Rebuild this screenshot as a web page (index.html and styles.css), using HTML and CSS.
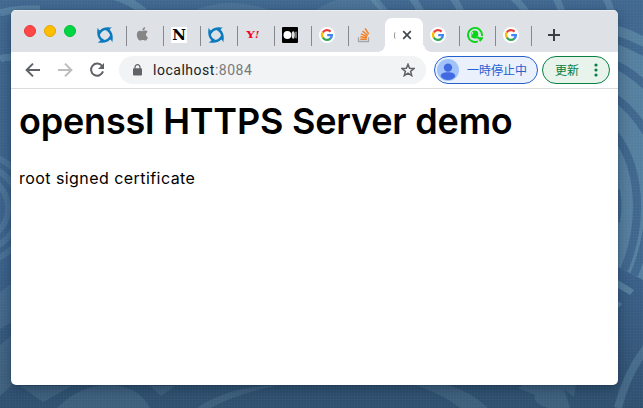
FILE: index.html
```html
<!DOCTYPE html>
<html lang="ja">
<head>
<meta charset="utf-8">
<title>localhost:8084</title>
<link rel="stylesheet" href="styles.css">
</head>
<body>
<svg class="wallpaper" viewBox="0 0 643 408" aria-hidden="true">
  <defs>
    <linearGradient id="sea" x1="0" y1="0" x2="0" y2="1"><stop offset="0" stop-color="#406890"/><stop offset=".65" stop-color="#3b618b"/><stop offset="1" stop-color="#2f506f"/></linearGradient>
    <pattern id="weave" width="3" height="3" patternUnits="userSpaceOnUse"><path d="M0 .5h3M.5 0v3" stroke="#fff" stroke-opacity=".02"/></pattern>
  </defs>
  <rect width="643" height="408" fill="url(#sea)"/>
  <g fill="none" stroke="#73a0b8" stroke-opacity=".4">
    <path d="M0 13Q18 8 40 9M0 59Q7 56 14 58" stroke-width="7"/>
    <path d="M114-4Q130 0 144 12" stroke-width="8"/>
    <path d="M368-8Q377 2 385 12M407-8Q415 0 421 12M449-8Q457 2 461 12M506-8Q518 0 526 12M552-8Q558 0 562 12M604-5Q609 2 611 12" stroke-width="7"/>
    <path d="M618 408Q626 374 648 345" stroke-width="8" stroke-opacity=".3"/>
    <circle cx="-25" cy="208" r="55" stroke-width="6" stroke-opacity=".25"/>
    <circle cx="-25" cy="208" r="44" stroke-width="6" stroke-opacity=".25"/>
    <circle cx="-25" cy="208" r="33" stroke-width="6" stroke-opacity=".25"/>
  </g>
  <path d="M616 25Q630 29 643 36V280L616 266Z" fill="#557f9f"/>
  <path d="M614 39Q630 44 646 53M614 64Q630 71 646 86M614 97Q631 108 646 132M614 133Q637 162 637 207Q637 240 624 270M648 222Q644 252 634 275M616 190Q619 207 616 222" fill="none" stroke="#3f678e" stroke-width="8"/>
  <path d="M618 280L634 290L630 295L618 288ZM618 301L622 304L618 308Z" fill="#557f9f"/>
  <g fill="#82a4b6" fill-opacity=".18">
    <path d="M190 12Q230-6 275 12ZM313 12Q342-9 374-1L386 12ZM0 292L12 283V322L0 329ZM0 345L12 335V385L0 396Z"/>
    <path d="M20 386H72L43 402ZM57 408Q80 385 108 385Q138 385 150 408ZM150 386H175L161 396ZM197 408Q228 386 280 385Q235 394 211 408ZM415 385H448Q470 391 488 408H460Q443 394 415 385ZM518 388Q526 382 535 385H576L574 397L564 389L570 408H548Q532 403 535 395Z"/>
  </g>
  <rect width="643" height="408" fill="url(#weave)"/>
</svg>
<svg class="symbols" aria-hidden="true">
  <symbol id="google" viewBox="0 0 16 16">
    <circle cx="8" cy="8" r="8" fill="#fff"/>
    <g fill="none" stroke-width="2.3"><path d="M3.8 5.5A4.9 4.9 0 0 1 11.6 4.6" stroke="#ea4335"/><path d="M3.8 5.4A4.9 4.9 0 0 0 3.8 10.6" stroke="#fbbc05"/><path d="M3.8 10.5A4.9 4.9 0 0 0 11.3 11.6" stroke="#34a853"/><path d="M11.2 11.7A4.9 4.9 0 0 0 12.9 8.1H8.2" stroke="#4285f4"/></g>
  </symbol>
  <symbol id="swirl" viewBox="0 0 16 16">
    <g id="blades" fill="#0b7abf">
      <path id="blade" d="M2.8 3.4C6-.2 11-.2 15.4.8C13.6 1.2 13 1.9 12.5 2.9C9.500 2.300 6.2 2.7 3.900 5.900C2.6 7.700 2.400 9 2.400 10.500C.9 8.300 1.2 5.400 2.800 3.400Z"/>
      <use href="#blade" transform="rotate(90 8 8)"/>
      <use href="#blade" transform="rotate(180 8 8)"/>
      <use href="#blade" transform="rotate(270 8 8)"/>
    </g>
  </symbol>
</svg>

<main class="window">
  <header class="tabstrip">
    <div class="lights"><i class="light red"></i><i class="light yellow"></i><i class="light green"></i></div>
    <nav class="tabs">
      <span class="tab"><svg class="favicon"><use href="#swirl"/></svg></span>
      <span class="tab"><svg class="favicon apple" viewBox="0 0 16 16"><path fill="#858585" d="M8.400 4.500C8.200 2.700 9.500 1.200 11.100.9c.2 1.800-1.200 3.500-2.700 3.600ZM8.200 5.300c.8 0 1.600-.7 2.800-.7 1.100 0 2.100.5 2.600 1.400-2.400 1.400-2 4.400.4 5.400-.5 1.300-1.600 3.200-2.800 3.200-.9 0-1.300-.5-2.500-.5s-1.600.5-2.500.5c-1.600 0-3.400-3.200-3.400-5.800C2.800 6.100 4.400 4.700 6 4.700c1 0 1.700.6 2.200.6Z"/></svg></span>
      <span class="tab"><span class="favicon letter-n">N</span></span>
      <span class="tab"><svg class="favicon"><use href="#swirl"/></svg></span>
      <span class="tab"><span class="favicon yahoo"><b>Y</b><em>!</em></span></span>
      <span class="tab"><svg class="favicon" viewBox="0 0 16 16"><rect width="16" height="16" rx="1"/><circle cx="5.4" cy="8" r="3.9" fill="#fff"/><ellipse cx="11.2" cy="8" rx="1.6" ry="3.7" fill="#ddd"/><path d="M14 4.700v6.600" stroke="#ddd"/></svg></span>
      <span class="tab"><svg class="favicon"><use href="#google"/></svg></span>
      <span class="tab plain"><svg class="favicon" viewBox="0 0 16 16" fill="none"><path d="M2.500 10.300v4.200h10v-4.200" stroke="#a5a7aa" stroke-width="1.3"/><path d="M4.300 12.300h6.400M4.400 9.700l6.500 1M4.900 6.900l6.200 2.700M6.500 4l5.200 4.500M9.100 1.400l3.600 5.800" stroke="#f48024" stroke-width="1.500"/></svg></span>
      <span class="tab active"><span class="clip"></span><svg class="close" viewBox="0 0 10 10"><path d="M1.200 1.200l7.600 7.600M8.800 1.200L1.200 8.800"/></svg></span>
      <span class="tab"><svg class="favicon"><use href="#google"/></svg></span>
      <span class="tab narrow"><svg class="favicon" viewBox="0 0 16 16" fill="none" stroke="#0bd51a"><path d="M10.800 14.300A7 7 0 1 1 14.900 9" stroke-width="1.900"/><path d="M10.600 11.200h4.300L12.600 14" stroke-width="2"/><circle cx="7.800" cy="7" r="3.500" fill="#0bd51a" stroke="none"/><path d="M4.300 9.300Q8 12 11.800 9.800" stroke-width="1.500"/><path d="M6 5q-1 1-.5 2.200" stroke="#fff" stroke-width=".8"/></svg></span>
      <span class="tab narrow"><svg class="favicon"><use href="#google"/></svg></span>
      <svg class="plus" viewBox="0 0 12 12"><path d="M6 0v12M0 6h12"/></svg>
    </nav>
  </header>
  <section class="toolbar">
    <div class="navigation">
      <svg viewBox="0 0 16 16"><path d="M15 8H2M8 1.600L1.600 8L8 14.400"/></svg>
      <svg class="disabled" viewBox="0 0 16 16"><path d="M1 8h13M8 1.600L14.400 8L8 14.400"/></svg>
      <svg viewBox="0 0 16 16"><path d="M13.100 4A6.100 6.100 0 1 0 14 9.400"/><path d="M15 1v6H9Z" fill="#5f6368" stroke="none"/></svg>
    </div>
    <div class="omnibox">
      <svg class="lock" viewBox="0 0 9 12"><path d="M2 5V3.200a2.500 2.500 0 0 1 5 0V5" fill="none" stroke="#5f6368" stroke-width="1.200"/><rect y="4.300" width="9" height="7.300" rx="1" fill="#5f6368"/></svg>
      <span class="url">localhost<span>:8084</span></span>
      <svg class="star" viewBox="0 0 14 14"><path d="M7 1.200l1.600 4 4.400.3-3.400 2.800 1.100 4.300L7 10.200l-3.700 2.400 1.100-4.300L1 5.500l4.400-.3Z"/></svg>
    </div>
    <div class="profile"><svg viewBox="0 0 22 22"><circle cx="11" cy="11" r="11" fill="#a1c2fa"/><circle cx="11" cy="8.600" r="4.200" fill="#4169e1"/><path d="M3.700 17.500c0-2.900 3-4.200 7.300-4.200s7.300 1.300 7.300 4.200Q15.400 21 11 21t-7.300-3.500Z" fill="#4169e1"/></svg><span>一時停止中</span></div>
    <div class="update"><span>更新</span><svg viewBox="0 0 4 14"><circle cx="2" cy="2" r="1.600"/><circle cx="2" cy="7" r="1.600"/><circle cx="2" cy="12" r="1.600"/></svg></div>
  </section>
  <article class="page"><h1>openssl HTTPS Server demo</h1><p>root signed certificate</p></article>
</main>
</body>
</html>
```
FILE: styles.css
```css
* { box-sizing: border-box; }
body { margin: 0; width: 643px; height: 408px; padding: 10px 25px 23px 11px; overflow: hidden; background: #3f678e; }
svg { display: block; }
.wallpaper { position: absolute; inset: 0; width: 643px; height: 408px; z-index: -1; }
.symbols { position: absolute; width: 0; height: 0; }
.window { width: 607px; height: 375px; background: #fff; border-radius: 5px; overflow: hidden; box-shadow: 0 0 1px #0b2035, 0 4px 14px rgba(0, 20, 40, .38); }
.tabstrip { display: flex; height: 42px; background: #dee1e6; border-top: 1px solid #edeff1; }
.lights { display: flex; gap: 8px; width: 79px; padding: 14px 0 0 13px; }
.light { width: 12px; height: 12px; border-radius: 50%; border: 1px solid; }
.red { background: #ff4746; border-color: #e5383a; }
.yellow { background: #ffbd00; border-color: #e4a500; }
.green { background: #00d641; border-color: #00bd37; }
.tabs { display: flex; align-items: flex-start; }
.tab { position: relative; width: 37px; height: 41px; padding: 16px 0 0 7px; }
.tab::after { content: ""; position: absolute; right: 0; top: 15px; width: 1px; height: 20px; background: #85888d; }
.plain::after, .active::after { display: none; }
.narrow { width: 36px; }
.favicon { display: block; width: 16px; height: 16px; }
.apple { margin-top: -1px; }
.letter-n { background: #fff; font: bold 15px/16px "DejaVu Serif", serif; text-align: center; color: #000; }
.yahoo { display: flex; align-items: center; justify-content: center; font: bold 10px/16px "DejaVu Serif", serif; color: #f5001d; }
.yahoo b { transform: scaleX(1.2); }
.yahoo em { margin-left: 1px; }
.active { display: flex; align-items: center; gap: 7px; height: 34px; margin: 7px 0 0; padding: 0 0 0 8px; background: #fff; border-radius: 7px 7px 0 0; box-shadow: -1px 0 #fff; }
.active::before { content: ""; position: absolute; bottom: 0; left: -8px; width: 53px; height: 7px; background: radial-gradient(circle at 0 0, transparent 6.5px, #fff 7px) left / 8px 7px no-repeat, radial-gradient(circle at 8px 0, transparent 6.5px, #fff 7px) right / 8px 7px no-repeat; }
.clip { width: 2px; height: 7px; border-left: 1px solid #999; border-radius: 4px 0 0 4px; }
.close { width: 10px; height: 10px; margin-left: -1px; fill: none; stroke: #44484c; stroke-width: 1.7; }
.plus { width: 12px; height: 12px; margin: 18px 0 0 16px; stroke: #3c4043; stroke-width: 2; }
.toolbar { display: flex; align-items: center; height: 37px; padding: 0 8px 0 14px; border-bottom: 1px solid #d9dbdd; }
.navigation { display: flex; gap: 16px; width: 94px; fill: none; stroke: #5f6368; stroke-width: 2; }
.navigation svg { width: 16px; height: 16px; }
.navigation .disabled { stroke: #bbbdbf; }
.omnibox { display: flex; align-items: center; width: 307px; height: 28px; padding: 0 11px 0 14px; border-radius: 14px; background: #f1f3f4; }
.lock { width: 9px; height: 12px; }
.url { margin-left: 11px; font: 14px/20px Roboto, sans-serif; letter-spacing: .52px; color: #202124; }
.url span { color: #777a7d; }
.star { width: 14px; height: 14px; margin-left: auto; fill: none; stroke: #5f6368; stroke-width: 1.5; }
.profile, .update { display: flex; align-items: center; height: 28px; border: 1px solid; border-radius: 14px; font: 12px/18px "Noto Sans CJK JP", sans-serif; white-space: nowrap; }
.profile { width: 104px; margin-left: 8px; padding-left: 2px; color: #2560cf; background: #eaf1fc; }
.profile svg { width: 22px; height: 22px; margin-right: 8px; }
.update { width: 68px; margin-left: 4px; padding: 0 11px 0 12px; justify-content: space-between; color: #078043; background: #e7f3eb; }
.update svg { width: 4px; height: 14px; fill: currentColor; }
.page { padding: 8px; color: #000; font-family: Inter, sans-serif; }
h1 { margin: 0; font-size: 36px; line-height: 48px; font-weight: 600; letter-spacing: -.2px; white-space: nowrap; }
p { margin: 21px 0 0; font-size: 16px; line-height: 24px; letter-spacing: .44px; }
```
